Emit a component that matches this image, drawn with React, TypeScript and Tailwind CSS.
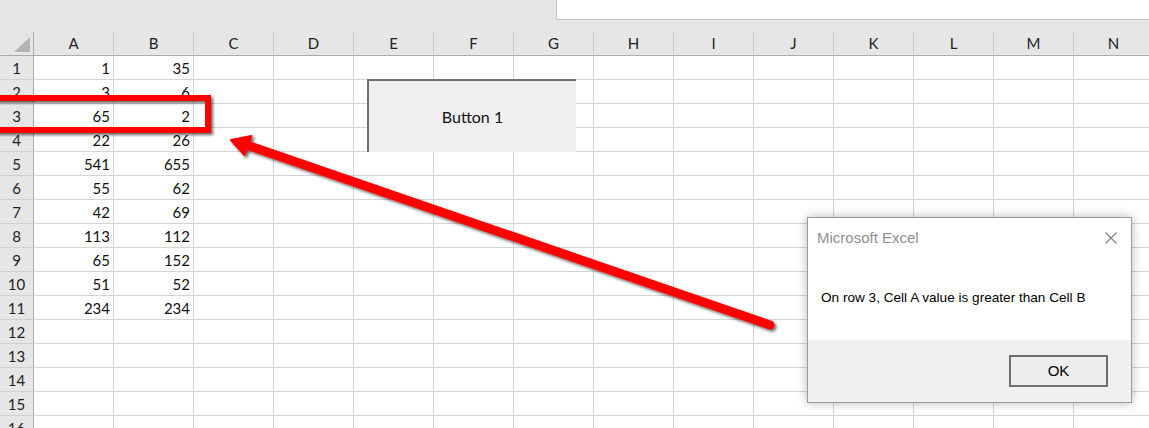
import React from "react";

const COLS = ["A", "B", "C", "D", "E", "F", "G", "H", "I", "J", "K", "L", "M", "N"];
const A = [1, 3, 65, 22, 541, 55, 42, 113, 65, 51, 234];
const B = [35, 6, 2, 26, 655, 62, 69, 112, 152, 52, 234];
const ROWS = Array.from({ length: 16 }, (_, i) => i + 1);

const cellFont = { fontFamily: "Lato, 'Open Sans', sans-serif" };

export default function App() {
  return (
    <div
      className="relative w-[1149px] h-[428px] overflow-hidden bg-white text-[15px] text-[#111]"
      style={cellFont}
    >
      {/* top band with formula bar */}
      <div className="h-[32px] bg-[#e6e6e6] flex">
        <div className="w-[556px]" />
        <div className="flex-1 h-[20px] bg-white border-l border-b border-[#c6c6c6]" />
      </div>

      {/* column header row */}
      <div className="flex h-[24px] bg-[#e6e6e6] border-b border-[#ababab]">
        <div className="w-[34px] shrink-0 border-r border-[#ababab] relative">
          <svg width="34" height="23" className="absolute left-0 top-0">
            <polygon points="30,5 30,20 14,20" fill="#b4b4b4" />
          </svg>
        </div>
        {COLS.map((c) => (
          <div
            key={c}
            className="w-[80px] shrink-0 border-r border-[#c8c8c8] flex items-center justify-center text-[#222]"
          >
            {c}
          </div>
        ))}
      </div>

      {/* rows */}
      {ROWS.map((r) => (
        <div key={r} className="flex h-[24px]">
          <div className="w-[34px] shrink-0 bg-[#e6e6e6] border-r border-[#ababab] border-b border-b-[#cfcfcf] flex items-center justify-center pt-[2px] text-[#222]">
            {r}
          </div>
          {COLS.map((c, ci) => {
            let v: number | string = "";
            if (ci === 0 && r <= A.length) v = A[r - 1];
            if (ci === 1 && r <= B.length) v = B[r - 1];
            return (
              <div
                key={c}
                className="w-[80px] shrink-0 border-r border-b border-[#d4d4d4] flex items-center justify-end pr-[3px] pt-[2px]"
              >
                {v}
              </div>
            );
          })}
        </div>
      ))}

      {/* Button 1 form control */}
      <div className="absolute left-[367px] top-[79px] w-[209px] h-[73px] bg-[#efefef] border-l-2 border-t-2 border-[#6e6e6e] flex items-center justify-center text-[16px] text-[#111]">
        Button 1
      </div>

      {/* annotation overlay */}
      <svg
        className="absolute left-0 top-0 pointer-events-none"
        width="1149"
        height="428"
      >
        <defs>
          <filter id="sh" x="-20%" y="-20%" width="140%" height="140%">
            <feDropShadow dx="2" dy="2" stdDeviation="1.5" floodColor="#000" floodOpacity="0.6" />
          </filter>
        </defs>
        <g filter="url(#sh)">
          <rect x="-20" y="98" width="228" height="32" fill="none" stroke="#ff0000" strokeWidth="6" />
        </g>
        <g filter="url(#sh)">
          <line x1="770" y1="325" x2="244" y2="144" stroke="#ff0000" strokeWidth="9" strokeLinecap="round" />
          <polygon points="231,140 251.5,136 244.5,155" fill="#ff0000" stroke="#ff0000" strokeWidth="2" strokeLinejoin="round" />
        </g>
      </svg>

      {/* message box */}
      <div
        className="absolute left-[807px] top-[217px] w-[325px] h-[186px] bg-white border border-[#9a9a9a] shadow-[0_0_10px_rgba(0,0,0,0.28)] flex flex-col"
        style={{ fontFamily: "'Liberation Sans', Arial, sans-serif" }}
      >
        <div className="h-[40px] flex items-center justify-between pl-[9px] pr-[14px]">
          <span className="text-[15px] text-[#8f8f8f]">Microsoft Excel</span>
          <svg width="12" height="12" viewBox="0 0 12 12">
            <path d="M0.5 0.5 L11.5 11.5 M11.5 0.5 L0.5 11.5" stroke="#7a7a7a" strokeWidth="1.1" />
          </svg>
        </div>
        <div className="flex-1 flex items-center pl-[13px] pb-[2px] text-[13.6px] text-black">
          On row 3, Cell A value is greater than Cell B
        </div>
        <div className="h-[62px] bg-[#f0f0f0] flex justify-end items-start pt-[15px] pr-[23px]">
          <div className="w-[99px] h-[32px] border-2 border-[#6f6f6f] bg-[#eeeeee] flex items-center justify-center text-[15px] text-black">
            OK
          </div>
        </div>
      </div>
    </div>
  );
}
